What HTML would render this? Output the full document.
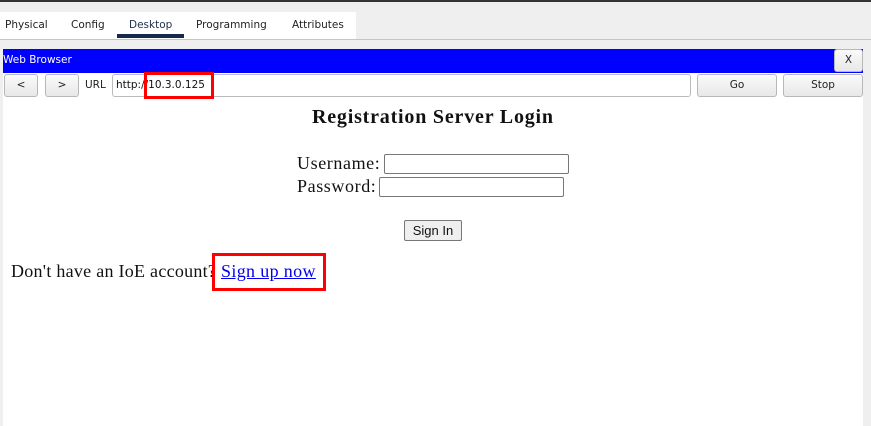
<!DOCTYPE html>
<html><head><style>
body{margin:0;width:871px;height:426px;background:#efefef;position:relative;overflow:hidden;font-family:"DejaVu Sans","Liberation Sans",sans-serif}
.a{position:absolute}
.tab{position:absolute;top:19px;font-size:10.5px;color:#222}
.btn{position:absolute;background:linear-gradient(#fafafa,#e8e8e8);border:1px solid #b8b8b8;border-radius:3px;font-size:10.5px;color:#222;text-align:center;box-sizing:border-box;line-height:21px}
.serif{font-family:"Liberation Serif","DejaVu Serif",serif;color:#111}
.inp{position:absolute;background:#fff;border:1px solid #777;border-radius:2px;box-sizing:border-box;height:20px}
</style></head><body>
<div class="a" style="left:0;top:0;width:871px;height:2px;background:#333"></div>
<div class="a" style="left:0;top:12px;width:356px;height:27px;background:#fff"></div>
<div class="a" style="left:0;top:39px;width:871px;height:1px;background:#c4c4c4"></div>
<div class="tab" style="left:5px">Physical</div>
<div class="tab" style="left:71px">Config</div>
<div class="tab" style="left:129px;color:#1e2f4a">Desktop</div>
<div class="a" style="left:117px;top:34px;width:67px;height:4px;background:#15294a"></div>
<div class="tab" style="left:196px">Programming</div>
<div class="tab" style="left:292px">Attributes</div>
<div class="a" style="left:3px;top:49px;width:860px;height:24px;background:#0000ff"></div>
<div class="a" style="left:3px;top:54px;font-size:10.5px;color:#fff">Web Browser</div>
<div class="btn" style="left:834px;top:49px;width:29px;height:23px">X</div>
<div class="a" style="left:3px;top:73px;width:860px;height:353px;background:#fff"></div>
<div class="btn" style="left:4px;top:74px;width:34px;height:23px">&lt;</div>
<div class="btn" style="left:45px;top:74px;width:34px;height:23px">&gt;</div>
<div class="a" style="left:85px;top:79px;font-size:10.5px;color:#222">URL</div>
<div class="a" style="left:112px;top:74px;width:579px;height:23px;background:#fff;border:1px solid #bbb;border-radius:3px;box-sizing:border-box"></div>
<div class="a" style="left:116px;top:79px;font-size:10.5px;color:#111">http://10.3.0.125</div>
<div class="btn" style="left:697px;top:74px;width:80px;height:23px">Go</div>
<div class="btn" style="left:783px;top:74px;width:80px;height:23px">Stop</div>
<div class="a" style="left:144px;top:72px;width:70px;height:27px;border:3px solid #f00;box-sizing:border-box"></div>
<div class="a serif" style="left:312px;top:106px;font-size:20px;font-weight:bold;letter-spacing:0.8px">Registration Server Login</div>
<div class="a serif" style="left:297px;top:153px;font-size:18px;letter-spacing:0.6px">Username:</div>
<div class="inp" style="left:384px;top:154px;width:185px"></div>
<div class="a serif" style="left:297px;top:176px;font-size:18px;letter-spacing:0.6px">Password:</div>
<div class="inp" style="left:379px;top:177px;width:185px"></div>
<div class="a" style="left:404px;top:220px;width:58px;height:21px;background:#efefef;border:1px solid #777;border-radius:2px;box-sizing:border-box;font-family:'Liberation Sans',sans-serif;font-size:13px;text-align:center;line-height:19px;color:#111">Sign In</div>
<div class="a serif" style="left:11px;top:261px;font-size:18px;letter-spacing:0.27px">Don't have an IoE account?</div>
<div class="a serif" style="left:221px;top:261px;font-size:18px;letter-spacing:0.35px;color:#00e;text-decoration:underline">Sign up now</div>
<div class="a" style="left:212px;top:253px;width:114px;height:38px;border:3px solid #f00;box-sizing:border-box"></div>
</body></html>
